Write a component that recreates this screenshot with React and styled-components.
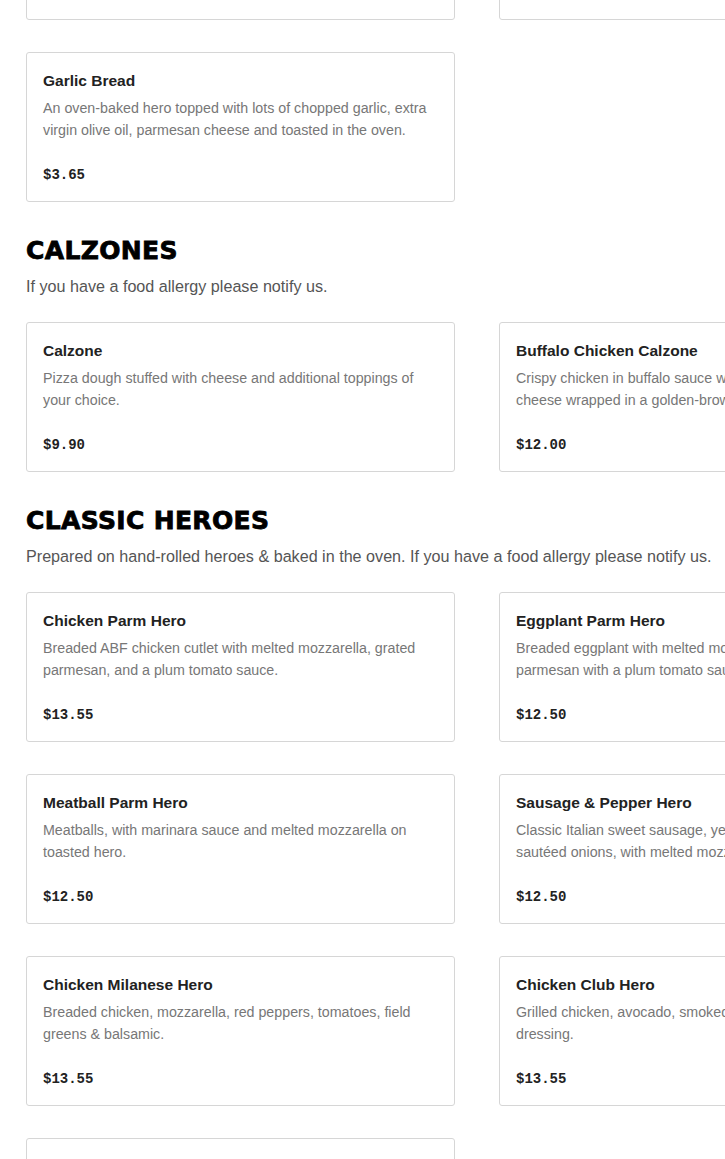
import React from "react";
import styled, { createGlobalStyle } from "styled-components";

const GlobalStyle = createGlobalStyle`
  html, body {
    margin: 0;
    padding: 0;
    background: #ffffff;
    overflow: hidden;
  }
  body {
    font-family: "Liberation Sans", Arial, sans-serif;
    color: #222222;
  }
`;

const Page = styled.main`
  width: 725px;
  height: 1159px;
  overflow: hidden;
`;

const Scrolled = styled.div`
  margin-top: -130px;
  padding-left: 26px;
  width: 960px;
`;

const Section = styled.section`
  display: flex;
  flex-direction: column;
  & + & {
    margin-top: 33px;
  }
`;

const Heading = styled.h2`
  margin: 0;
  font-family: "DejaVu Sans", "Liberation Sans", sans-serif;
  font-weight: 700;
  font-size: 25px;
  line-height: 31px;
  letter-spacing: 0.35px;
  color: #000000;
  -webkit-text-stroke: 0.8px #000000;
  text-transform: uppercase;
`;

const Note = styled.p`
  margin: 8px 0 24px;
  font-size: 16.15px;
  line-height: 24px;
  color: #555555;
`;

const Grid = styled.div`
  display: grid;
  grid-template-columns: 429px 429px;
  column-gap: 44px;
  row-gap: 32px;
`;

const Card = styled.article`
  box-sizing: border-box;
  height: 150px;
  border: 1px solid #d6d6d6;
  border-radius: 3px;
  padding: 16px 16px 15px 16px;
  display: flex;
  flex-direction: column;
  background: #ffffff;
`;

const Title = styled.h3`
  margin: 0;
  font-size: 15.5px;
  line-height: 24px;
  font-weight: 700;
  color: #222222;
`;

const Desc = styled.p`
  margin: 4px 0 0;
  font-size: 14.25px;
  line-height: 22px;
  color: #777777;
`;

const Price = styled.span`
  margin-top: auto;
  font-family: "Liberation Mono", "Courier New", monospace;
  font-weight: 700;
  font-size: 14px;
  line-height: 22px;
  color: #222222;
`;

const sections = [
  {
    items: [
      {
        name: "Garlic Knots",
        desc: "Hand-tied knots of pizza dough brushed with garlic, olive oil and parmesan.",
        price: "$4.50",
      },
      {
        name: "Mozzarella Sticks",
        desc: "Breaded mozzarella fried golden and served with marinara sauce.",
        price: "$8.25",
      },
      {
        name: "Garlic Bread",
        desc: "An oven-baked hero topped with lots of chopped garlic, extra virgin olive oil, parmesan cheese and toasted in the oven.",
        price: "$3.65",
      },
    ],
  },
  {
    title: "Calzones",
    note: "If you have a food allergy please notify us.",
    items: [
      {
        name: "Calzone",
        desc: "Pizza dough stuffed with cheese and additional toppings of your choice.",
        price: "$9.90",
      },
      {
        name: "Buffalo Chicken Calzone",
        desc: "Crispy chicken in buffalo sauce with mozzarella and blue cheese wrapped in a golden-brown crust.",
        price: "$12.00",
      },
    ],
  },
  {
    title: "Classic Heroes",
    note: "Prepared on hand-rolled heroes & baked in the oven. If you have a food allergy please notify us.",
    items: [
      {
        name: "Chicken Parm Hero",
        desc: "Breaded ABF chicken cutlet with melted mozzarella, grated parmesan, and a plum tomato sauce.",
        price: "$13.55",
      },
      {
        name: "Eggplant Parm Hero",
        desc: "Breaded eggplant with melted mozzarella and grated parmesan with a plum tomato sauce.",
        price: "$12.50",
      },
      {
        name: "Meatball Parm Hero",
        desc: "Meatballs, with marinara sauce and melted mozzarella on toasted hero.",
        price: "$12.50",
      },
      {
        name: "Sausage & Pepper Hero",
        desc: "Classic Italian sweet sausage, yellow & red peppers and sautéed onions, with melted mozzarella.",
        price: "$12.50",
      },
      {
        name: "Chicken Milanese Hero",
        desc: "Breaded chicken, mozzarella, red peppers, tomatoes, field greens & balsamic.",
        price: "$13.55",
      },
      {
        name: "Chicken Club Hero",
        desc: "Grilled chicken, avocado, smoked bacon, tomato & ranch dressing.",
        price: "$13.55",
      },
      {
        name: "Chicken Bacon Ranch Hero",
        desc: "Grilled chicken, crispy bacon, mozzarella and ranch dressing.",
        price: "$13.55",
      },
    ],
  },
];

function MenuCard({ item }) {
  return (
    <Card>
      <Title>{item.name}</Title>
      <Desc>{item.desc}</Desc>
      <Price>{item.price}</Price>
    </Card>
  );
}

export default function App() {
  return (
    <Page>
      <GlobalStyle />
      <Scrolled>
        {sections.map((s, i) => (
          <Section key={i}>
            {s.title && <Heading>{s.title}</Heading>}
            {s.note && <Note>{s.note}</Note>}
            <Grid>
              {s.items.map((it) => (
                <MenuCard key={it.name} item={it} />
              ))}
            </Grid>
          </Section>
        ))}
      </Scrolled>
    </Page>
  );
}
